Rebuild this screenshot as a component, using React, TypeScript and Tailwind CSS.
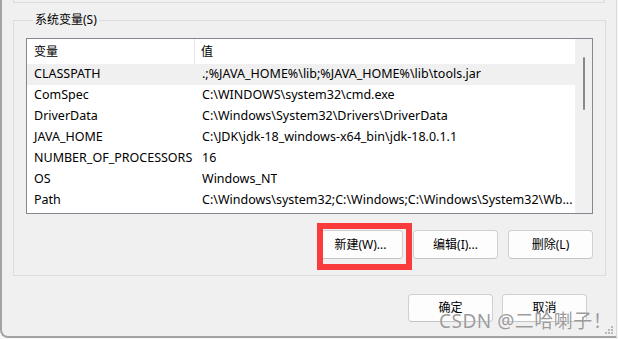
const rows: [string, string][] = [
  ["CLASSPATH", ".;%JAVA_HOME%\\lib;%JAVA_HOME%\\lib\\tools.jar"],
  ["ComSpec", "C:\\WINDOWS\\system32\\cmd.exe"],
  ["DriverData", "C:\\Windows\\System32\\Drivers\\DriverData"],
  ["JAVA_HOME", "C:\\JDK\\jdk-18_windows-x64_bin\\jdk-18.0.1.1"],
  ["NUMBER_OF_PROCESSORS", "16"],
  ["OS", "Windows_NT"],
  ["Path", "C:\\Windows\\system32;C:\\Windows;C:\\Windows\\System32\\Wb..."],
];

const font = { fontFamily: '"Noto Sans", "Noto Sans CJK SC", sans-serif' };

function Button({ label, className = "" }: { label: string; className?: string }) {
  return (
    <div
      className={`flex w-[85px] items-center justify-center rounded-[4px] border border-[#d0d0d0] border-b-[#c4c4c4] bg-[#fdfdfd] text-[12px] text-black ${className}`}
    >
      {label}
    </div>
  );
}

function Grip() {
  const dots = [
    [6, 0],
    [6, 3],
    [3, 3],
    [6, 6],
    [3, 6],
    [0, 6],
  ];
  return (
    <svg width="8" height="8" viewBox="0 0 8 8" className="absolute bottom-[2px] right-[3px]">
      {dots.map(([x, y]) => (
        <rect key={`${x}-${y}`} x={x} y={y} width="2" height="2" fill="#b8b8b8" />
      ))}
    </svg>
  );
}

export default function App() {
  return (
    <div className="relative h-[339px] w-[618px] overflow-hidden bg-[#f7f7f7]" style={font}>
      <div className="relative h-[338px] w-[617px] rounded-bl-[8px] border-b-2 border-l-2 border-r border-[#a3a3a3] border-r-[#dadada] bg-[#f0f0f0]">
        {/* bottom edge of the user-variables group above */}
        <div className="ml-[11px] h-[3px] w-[592px] border-b border-l border-r border-[#dcdcdc]" />

        <fieldset className="ml-[11px] mt-[9px] h-[264px] w-[592px] border border-[#dcdcdc] px-[12px]">
          <legend className="ml-[7px] px-[2px] text-[12px] leading-[16px] text-black">系统变量(S)</legend>

          <div className="mt-[10px] flex h-[176px] w-[567px] border border-[#828790] bg-white">
            <div className="flex-1">
              <div className="flex h-[25px] items-center text-[12px] text-black">
                <div className="flex h-full w-[168px] items-center border-r border-[#e5e5e5] pl-[7px]">变量</div>
                <div className="pl-[6px]">值</div>
              </div>
              {rows.map(([name, value], i) => (
                <div
                  key={name}
                  className={`flex h-[21px] items-center whitespace-nowrap text-[12.5px] text-black ${
                    i === 0 ? "bg-[#f0f0f0]" : ""
                  }`}
                >
                  <div className="w-[175px] pl-[7px]">{name}</div>
                  <div className="overflow-hidden">{value}</div>
                </div>
              ))}
            </div>
            <div className="flex w-[17px] justify-center bg-[#f0f0f0] pt-[18px]">
              <div className="h-[53px] w-[2px] rounded-full bg-[#8a8a8a]" />
            </div>
          </div>

          <div className="mt-[16px] flex justify-end gap-[10px]">
            <div className="relative">
              <Button label="新建(W)..." className="h-[29px]" />
              <div className="absolute left-[-1px] top-[-7px] h-[47px] w-[95px] border-[6px] border-[#fa3b3b]" />
            </div>
            <Button label="编辑(I)..." className="h-[29px]" />
            <Button label="删除(L)" className="h-[29px]" />
          </div>
        </fieldset>

        <div className="ml-[11px] mt-[18px] flex w-[574px] justify-end gap-[9px]">
          <Button label="确定" className="h-[28px]" />
          <Button label="取消" className="h-[28px]" />
        </div>

        <Grip />
      </div>

      <div className="absolute left-[439px] top-[307px] text-[19px] tracking-[0.5px] text-[#7a7a7a]/75 [text-shadow:0_0_1px_#ffffff]">
        CSDN @二哈喇子！
      </div>
    </div>
  );
}
